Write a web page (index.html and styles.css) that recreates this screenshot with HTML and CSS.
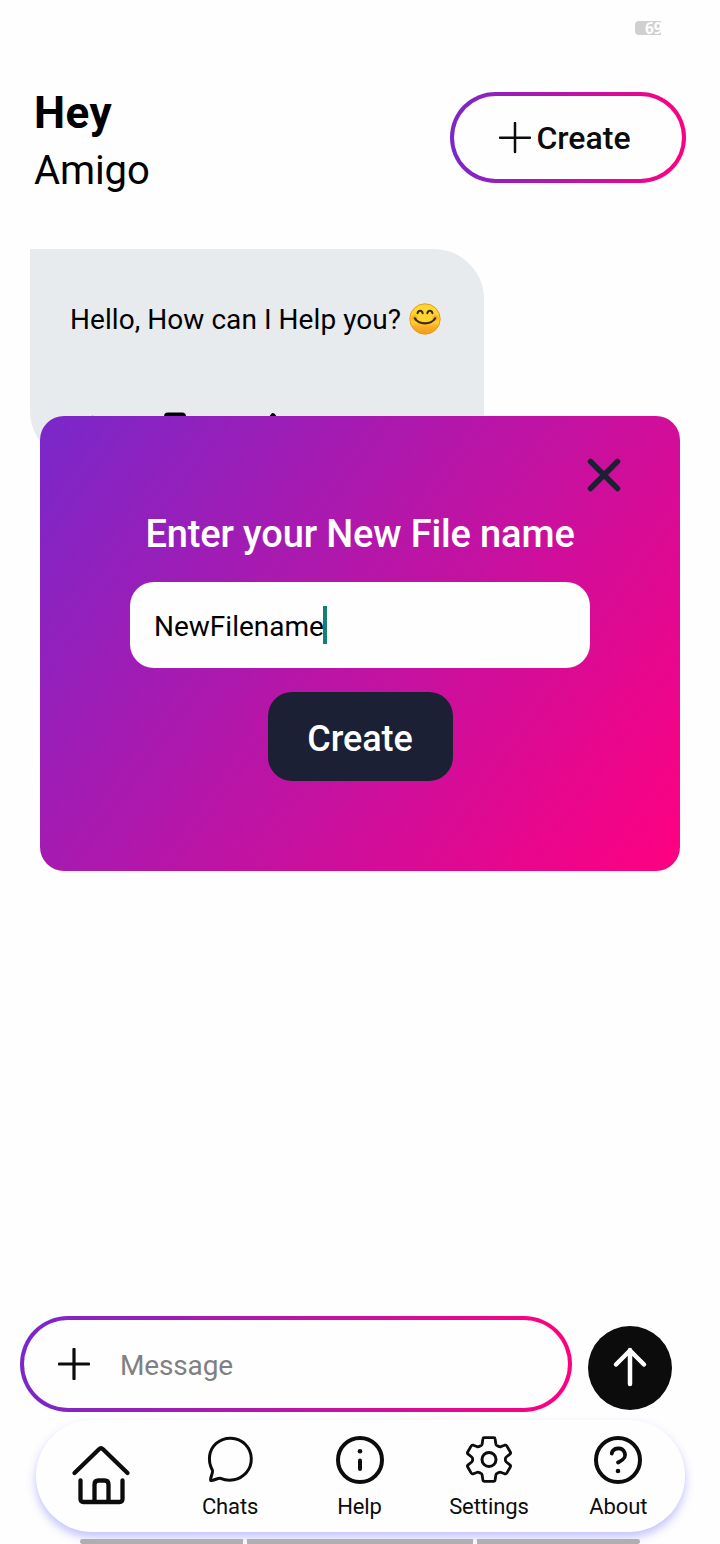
FILE: index.html
```html
<!DOCTYPE html>
<html lang="en">
<head>
<meta charset="utf-8">
<title>Amigo</title>
<link rel="stylesheet" href="styles.css">
</head>
<body>
<div class="screen">
  <div class="status"><div class="battery"><span>69</span></div></div>

  <header class="header">
    <div class="greeting">
      <div class="hey">Hey</div>
      <div class="name">Amigo</div>
    </div>
    <div class="create">
      <svg class="create-plus" width="32" height="32" viewBox="0 0 32 32"><path d="M16 1v29M1 15.700h30"/></svg>
      <span>Create</span>
    </div>
  </header>

  <main class="chat">
    <div class="bubble">
      <div class="bubble-line">
        <span>Hello, How can I Help you?</span>
        <svg width="32" height="32" viewBox="0 0 32 32">
          <defs>
            <linearGradient id="face" x1="0" y1="0" x2="0" y2="1"><stop offset="0" stop-color="#fdd835"/><stop offset=".6" stop-color="#fdd42f"/><stop offset=".75" stop-color="#f9b025"/><stop offset="1" stop-color="#f59a1b"/></linearGradient>
            <radialGradient id="blush"><stop offset="0" stop-color="#f07040" stop-opacity=".75"/><stop offset="1" stop-color="#f07040" stop-opacity="0"/></radialGradient>
          </defs>
          <circle cx="16" cy="16" r="15.200" fill="url(#face)" stroke="#e59a1c" stroke-width="1"/>
          <circle cx="5.500" cy="15" r="4" fill="url(#blush)"/><circle cx="26.500" cy="15" r="4" fill="url(#blush)"/>
          <path d="M8.500 10.300q.6-2.500 2.600-2.500t2.600 2.500M18.300 10.300q.6-2.500 2.600-2.500t2.600 2.500" fill="none" stroke="#422b0d" stroke-width="2" stroke-linecap="round"/>
          <path d="M6 15.500C10 22 22 22 26 15.500" fill="none" stroke="#422b0d" stroke-width="2.300" stroke-linecap="round"/>
        </svg>
      </div>
      <div class="actions">
        <svg width="36" height="36" viewBox="0 0 36 36"><path d="M10 7l7 20L23 6.800"/></svg>
        <svg width="36" height="36" viewBox="0 0 36 36"><path d="M7 30V5.500q0-2 2-2h14q2 0 2 2V30"/></svg>
        <svg width="36" height="36" viewBox="0 0 36 36"><path d="M19 30V12L25 4L31 12v18"/></svg>
      </div>
    </div>
  </main>

  <div class="composer">
    <div class="message">
      <svg width="32" height="32" viewBox="0 0 32 32"><path d="M16 1.300v29.400M1.300 16h29.400"/></svg>
      <span>Message</span>
    </div>
    <div class="send">
      <svg width="40" height="44" viewBox="0 0 40 44"><path d="M20 38V4M6 18.500L20 4.500l14 14"/></svg>
    </div>
  </div>

  <nav class="nav">
    <div class="tab tab-home">
      <svg width="60" height="62" viewBox="0 0 60 62"><path d="M3.500 30L28 6.300q2-2 4 0L56.500 30M9.500 37.500V56q0 3 3 3h36q3 0 3-3V37.500M23.500 58V41.500q0-4 4-4h6q4 0 4 4V58" fill="none" stroke="#0c0c0c" stroke-width="4.300" stroke-linecap="round"/></svg>
    </div>
    <div class="tab">
      <svg class="icon" width="48" height="48" viewBox="0 0 48 48"><path d="M6.400 34.200C1.300 25 2.800 14 10.200 7.400 18.500.1 31.500.4 39.200 8.200 47 16 47.300 28.600 40.200 36.700 33.300 44.500 22.800 46 14.500 42.300 12.500 41.500 6 45.500 4.700 44.500 3.600 43.500 7.400 36 6.400 34.200Z" stroke-width="3"/></svg>
      <span>Chats</span>
    </div>
    <div class="tab">
      <svg class="icon" width="48" height="48" viewBox="0 0 48 48"><circle cx="24" cy="24" r="22" stroke-width="4"/><path d="M24 24.500v8.500" stroke-width="4"/><circle cx="24" cy="15.300" r="2.300" class="solid"/></svg>
      <span>Help</span>
    </div>
    <div class="tab">
      <svg class="icon" width="48" height="48" viewBox="0 0 48 48"><circle cx="24" cy="23.500" r="7" stroke-width="3"/><path d="M19.200 1.700h9.600q1.200 0 1.300 1.200l.8 5.300q.2 1.100 1.300 1.500l2 .9q1 .5 2-.1l3.400-1.300q1.500-.5 2.300.9l3.400 5.900q.7 1.200-.4 2.100L41.300 21q-.9.700-.9 1.700v1.600q0 1 .9 1.700l3.600 2.900q1.100.9.400 2.100l-3.400 5.900q-.8 1.400-2.300.9L36.200 36.500q-1-.6-2-.1l-2 .9q-1.100.4-1.300 1.500l-.8 5.300q-.1 1.200-1.300 1.200h-9.600q-1.200 0-1.300-1.200l-.8-5.300q-.2-1.100-1.300-1.500l-2-.9q-1-.5-2 .1L8.400 37.800q-1.500.5-2.300-.9L2.700 31q-.7-1.200.4-2.100L6.700 26q.9-.7.900-1.700v-1.600q0-1-.9-1.700L3.100 18.100q-1.100-.9-.4-2.100L6.100 10.100Q6.900 8.700 8.400 9.200l3.400 1.300q1 .6 2 .1l2-.9q1.100-.4 1.300-1.500l.8-5.300q.1-1.200 1.300-1.200Z" stroke-width="2.800"/></svg>
      <span>Settings</span>
    </div>
    <div class="tab">
      <svg class="icon" width="48" height="48" viewBox="0 0 48 48"><circle cx="24" cy="24" r="22" stroke-width="4"/><path d="M17.700 17.500C19 11.500 28 10.500 30.600 16.500 33 22.500 27 25 24 26.500" stroke-width="3.800"/><circle cx="24" cy="35" r="2.300" class="solid"/></svg>
      <span>About</span>
    </div>
  </nav>
  <div class="gesture"><i></i><i></i><i></i></div>

  <section class="modal">
    <svg class="close" width="40" height="40" viewBox="0 0 40 40"><path d="M6.500 6.500l27 27M33.500 6.500l-27 27"/></svg>
    <h1>Enter your New File name</h1>
    <div class="field"><span>NewFilename</span><i class="caret"></i></div>
    <div class="submit">Create</div>
  </section>
</div>
</body>
</html>
```
FILE: styles.css
```css
* { box-sizing: border-box; }
body { margin: 0; background: #fefefe; color: #000; font-family: Roboto, sans-serif; }
svg { display: block; flex: none; }
.screen { position: relative; width: 720px; height: 1544px; overflow: hidden; display: flex; flex-direction: column; }

.status { height: 92px; padding: 21px 59px 0 0; display: flex; justify-content: flex-end; }
.battery { width: 26px; height: 14px; background: #d0d0d0; border-radius: 4px 0 0 4px; padding-left: 10px; }
.battery span { display: block; font: bold 15.500px/14px "Open Sans", sans-serif; color: #fefefe; }

.header { height: 157px; padding: 0 34px; display: flex; justify-content: space-between; align-items: flex-start; }
.hey { font-size: 44px; line-height: 52px; font-weight: 700; margin-top: -5px; letter-spacing: .5px; }
.name { font-size: 40px; line-height: 48px; margin-top: 8px; letter-spacing: -.1px; }
.create { width: 236px; height: 91px; border: 4px solid transparent; border-radius: 46px; background: linear-gradient(#fefefe, #fefefe) padding-box, linear-gradient(90deg, #7928ca, #ff0080) border-box; display: flex; align-items: center; justify-content: center; gap: 5px; padding-right: 6px; font-size: 32px; font-weight: 500; color: #0c0c0c; }
.create span { padding-top: 1px; }
.create-plus { fill: none; stroke: #0c0c0c; stroke-width: 2.500; stroke-linecap: round; }

.chat { flex: 1; padding-left: 30px; }
.bubble { width: 454px; height: 212px; padding: 54px 40px 0; background: #e8ebee; border-radius: 0 50px 50px 50px; }
.bubble-line { display: flex; align-items: center; gap: 8px; height: 32px; font-size: 28px; letter-spacing: .055px; white-space: nowrap; }
.actions { display: flex; gap: 53px; margin-top: 76px; }
.actions svg { fill: none; stroke: #000; stroke-width: 4; stroke-linecap: round; stroke-linejoin: round; }

.composer { height: 104px; padding-left: 20px; display: flex; align-items: flex-start; gap: 16px; }
.message { width: 552px; height: 96px; border: 4px solid transparent; border-radius: 48px; background: linear-gradient(#fefefe, #fefefe) padding-box, linear-gradient(90deg, #7928ca, #ff0080) border-box; display: flex; align-items: center; padding-left: 34px; gap: 30px; font-size: 28px; letter-spacing: -.15px; color: #808080; }
.message span { padding-top: 2px; }
.message svg { fill: none; stroke: #0c0c0c; stroke-width: 3.200; stroke-linecap: round; }
.send { width: 84px; height: 84px; margin-top: 10px; border-radius: 50%; background: #0c0c0c; display: flex; align-items: center; justify-content: center; }
.send svg { fill: none; stroke: #fff; stroke-width: 4.500; stroke-linecap: round; stroke-linejoin: round; }

.nav { width: 649px; height: 112px; margin-left: 36px; padding-right: 2px; border-radius: 56px; background: #fefefe; box-shadow: 0 5px 10px rgba(80, 80, 255, .34); display: flex; }
.tab { flex: 1; display: flex; flex-direction: column; align-items: center; padding-top: 15.500px; font-size: 22px; line-height: 26px; gap: 10.500px; color: #0c0c0c; letter-spacing: -.1px; }
.tab-home { padding-top: 23px; }
.icon { fill: none; stroke: #0c0c0c; stroke-linecap: round; stroke-linejoin: round; }
.solid { fill: #0c0c0c; stroke: none; }
.gesture { margin: 7px 80px 0; height: 5px; display: grid; grid-template-columns: 163px 226px 163px; gap: 4px; border-radius: 3px; overflow: hidden; }
.gesture i { background: #b0aeb3; }

.modal { position: absolute; left: 40px; top: 416px; width: 640px; height: 455px; border-radius: 24px; background: linear-gradient(125.400deg, #7928ca, #ff0080); display: flex; flex-direction: column; align-items: center; padding-top: 39px; }
.close { align-self: flex-end; margin-right: 56px; fill: none; stroke: #1c2035; stroke-width: 5.500; stroke-linecap: round; }
.modal h1 { margin: 16px 0 0; font-size: 38px; line-height: 46px; font-weight: 500; letter-spacing: -.14px; color: #fff; white-space: nowrap; }
.field { margin-top: 25px; width: 460px; height: 86px; border-radius: 24px; background: #fefefe; display: flex; align-items: center; padding-left: 24px; font-size: 28px; }
.field span { padding-top: 2px; }
.caret { width: 4px; height: 38px; margin-left: -1px; background: #148074; }
.submit { margin-top: 24px; width: 185px; height: 89px; border-radius: 24px; background: #1c2035; color: #fff; font-size: 36px; font-weight: 500; letter-spacing: -.1px; display: flex; align-items: center; justify-content: center; padding-top: 5px; }
```
